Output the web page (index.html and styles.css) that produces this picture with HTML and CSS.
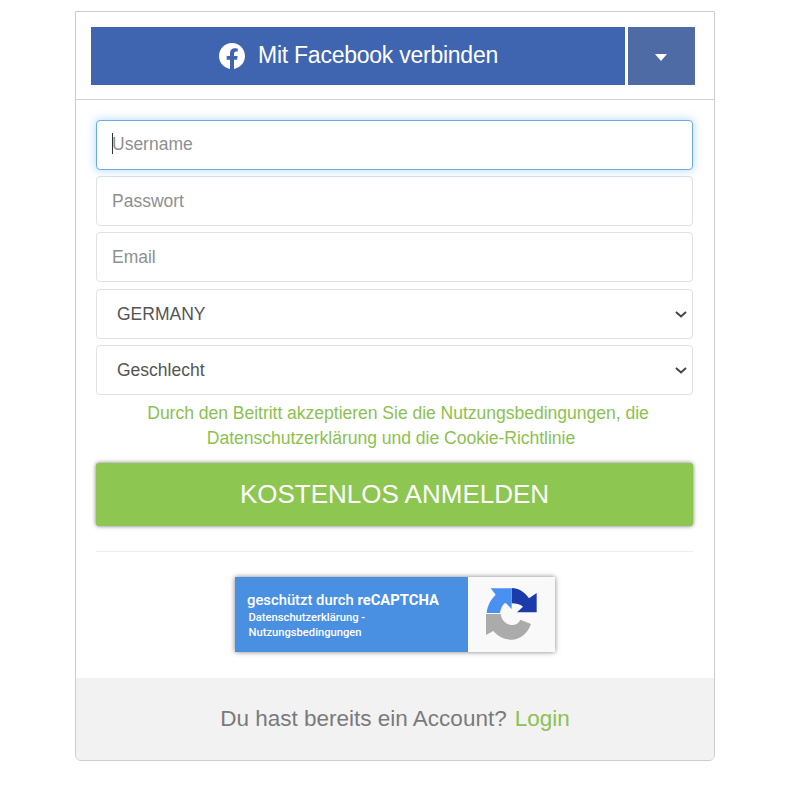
FILE: index.html
```html
<!DOCTYPE html>
<html lang="de">
<head>
  <meta charset="UTF-8" />
  <meta name="viewport" content="width=device-width, initial-scale=1.0" />
  <title>Anmelden</title>
  <link rel="stylesheet" href="styles.css">
</head>
<body>
  <div class="card">
    <div class="card-header">
      <a class="fb-btn" href="#">
        <svg class="fb-icon" viewBox="0 0 24 24" width="26" height="26" aria-hidden="true">
          <path fill="#fff" d="M24 12.073c0-6.627-5.373-12-12-12s-12 5.373-12 12c0 5.99 4.388 10.954 10.125 11.854v-8.385H7.078v-3.47h3.047V9.43c0-3.007 1.792-4.669 4.533-4.669 1.312 0 2.686.235 2.686.235v2.953H15.83c-1.491 0-1.956.925-1.956 1.874v2.25h3.328l-.532 3.47h-2.796v8.385C19.612 23.027 24 18.062 24 12.073z"/>
        </svg>
        <span class="fb-label">Mit Facebook verbinden</span>
      </a>
      <a class="fb-toggle" href="#" aria-label="Mehr"><span class="caret"></span></a>
    </div>

    <form class="card-body">
      <div class="field field-focus">
        <input class="form-control focus" type="text" placeholder="Username" />
        <span class="text-cursor"></span>
      </div>
      <div class="field"><input class="form-control" type="password" placeholder="Passwort" /></div>
      <div class="field"><input class="form-control" type="email" placeholder="Email" /></div>
      <div class="field select-field">
        <select class="form-control">
          <option>GERMANY</option>
        </select>
        <svg class="chevron" viewBox="0 0 12 7" width="12" height="7" aria-hidden="true">
          <path fill="none" stroke="#444" stroke-width="2" d="M1 1l5 4.5L11 1"/>
        </svg>
      </div>
      <div class="field select-field">
        <select class="form-control">
          <option>Geschlecht</option>
        </select>
        <svg class="chevron" viewBox="0 0 12 7" width="12" height="7" aria-hidden="true">
          <path fill="none" stroke="#444" stroke-width="2" d="M1 1l5 4.5L11 1"/>
        </svg>
      </div>

      <p class="terms">
        <span class="terms-first">Durch den Beitritt akzeptieren Sie die Nutzungsbedingungen, die</span>
        <span class="terms-second">Datenschutzerklärung und die Cookie-Richtlinie</span>
      </p>

      <button class="submit-btn" type="button">KOSTENLOS ANMELDEN</button>
      <hr class="divider" />

      <div class="recaptcha">
        <div class="recaptcha-text">
          <div class="recaptcha-title">geschützt durch <b>reCAPTCHA</b></div>
          <div class="recaptcha-links">Datenschutzerklärung -<br />Nutzungsbedingungen</div>
        </div>
        <div class="recaptcha-logo">
          <svg viewBox="78 57 153 156" width="51" height="52" aria-hidden="true">
            <path fill="#1c3aa9" d="M155 57C175 57 194 68 207 88L230 72V130H171L189 113C180 106 168 103 155 103Z"/>
            <path fill="#4a90f0" d="M92 58H155V120L136 101C127 107 122 118 120 132H80C82 110 92 92 107 77Z"/>
            <path fill="#ababab" d="M78 135H122C124 152 138 168 155 168C166 168 175 164 181 152L213 165C202 195 180 212 155 212C133 212 113 202 100 186L78 198Z"/>
          </svg>
        </div>
      </div>
    </form>

    <div class="card-footer">
      Du hast bereits ein Account? <a href="#">Login</a>
    </div>
  </div>
</body>
</html>
```

FILE: styles.css
```css
* {
  box-sizing: border-box;
}

body {
  font-family: "Liberation Sans", Arial, sans-serif;
  background-color: #fff;
  margin: 0;
  padding: 0;
  color: #555;
}

a {
  text-decoration: none;
}

.card {
  width: 640px;
  margin: 11px auto 0;
  background: #fff;
  border: 1px solid #ccc;
  border-radius: 0 0 6px 6px;
  overflow: hidden;
}

.card-header {
  display: flex;
  gap: 3px;
  height: 88px;
  padding: 15px 19px 14px 15px;
  border-bottom: 1px solid #d2d2d2;
}

.fb-btn {
  flex: 1;
  display: flex;
  align-items: center;
  justify-content: center;
  gap: 13px;
  background-color: #4065b0;
  color: #fff;
  font-size: 23px;
  letter-spacing: -0.25px;
}

.fb-icon {
  margin-left: 1px;
}

.fb-label {
  margin-top: -2px;
}

.fb-toggle {
  width: 67px;
  display: flex;
  align-items: center;
  justify-content: center;
  background-color: #4e6ba5;
}

.caret {
  width: 0;
  height: 0;
  margin-top: 3px;
  margin-right: 1px;
  border-top: 7px solid #fff;
  border-left: 6.5px solid transparent;
  border-right: 6.5px solid transparent;
}

.card-body {
  padding: 20px 21px 26px 20px;
}

.field {
  margin-bottom: 6.2px;
}

.field-focus,
.select-field {
  position: relative;
}

.text-cursor {
  position: absolute;
  left: 16px;
  top: 13px;
  width: 1px;
  height: 21px;
  background: #333;
}

.chevron {
  position: absolute;
  right: 6px;
  top: 22px;
  pointer-events: none;
}

.form-control {
  display: block;
  width: 100%;
  height: 50px;
  padding: 6px 15px;
  font-family: inherit;
  font-size: 17.5px;
  color: #555;
  background-color: #fff;
  border: 1px solid #dfe1e4;
  border-radius: 4px;
  outline: none;
}

select.form-control {
  padding-left: 20px;
  appearance: none;
}

.form-control::placeholder {
  color: #8f8f8f;
  opacity: 1;
}

.form-control.focus {
  padding-bottom: 8px;
  border-color: #6aabe0;
  box-shadow: 0 0 8px 1px rgba(128, 189, 255, 0.5);
}

.terms {
  margin: 5px 0 12px;
  font-size: 17.6px;
  line-height: 25px;
  text-align: center;
  color: #8cc152;
  letter-spacing: -0.05px;
}

.terms-first {
  display: block;
  padding-left: 7px;
}

.terms-second {
  display: block;
  padding-right: 7px;
}

.submit-btn {
  display: block;
  width: 100%;
  height: 63px;
  border: none;
  border-radius: 3px;
  background-color: #8dc650;
  color: #fff;
  font-family: inherit;
  font-size: 26px;
  box-shadow: 0 0 4px rgba(0, 0, 0, 0.55);
}

.divider {
  height: 1px;
  margin: 25px 0 25px;
  border: none;
  background: #eee;
}

.recaptcha {
  display: flex;
  width: 320px;
  height: 75px;
  margin: 0 auto;
  box-shadow: 0 0 5px rgba(0, 0, 0, 0.5);
  font-family: Roboto, sans-serif;
}

.recaptcha-text {
  width: 233px;
  padding: 15px 0 0 12.5px;
  background-color: #4a90e2;
  color: #fff;
}

.recaptcha-title {
  font-size: 14.8px;
  font-weight: 500;
  line-height: 16px;
}

.recaptcha-title b {
  font-weight: 700;
}

.recaptcha-links {
  margin: 2px 0 0 1.5px;
  font-size: 11.2px;
  font-weight: 500;
  line-height: 15.5px;
}

.recaptcha-logo {
  flex: 1;
  display: flex;
  align-items: center;
  justify-content: center;
  padding-bottom: 1px;
  background-color: #f9f9f9;
}

.card-footer {
  height: 82px;
  display: flex;
  align-items: center;
  justify-content: center;
  gap: 8px;
  background-color: #f2f2f2;
  font-size: 22.5px;
  color: #7a7a7a;
}

.card-footer a {
  color: #8cc152;
}
```
